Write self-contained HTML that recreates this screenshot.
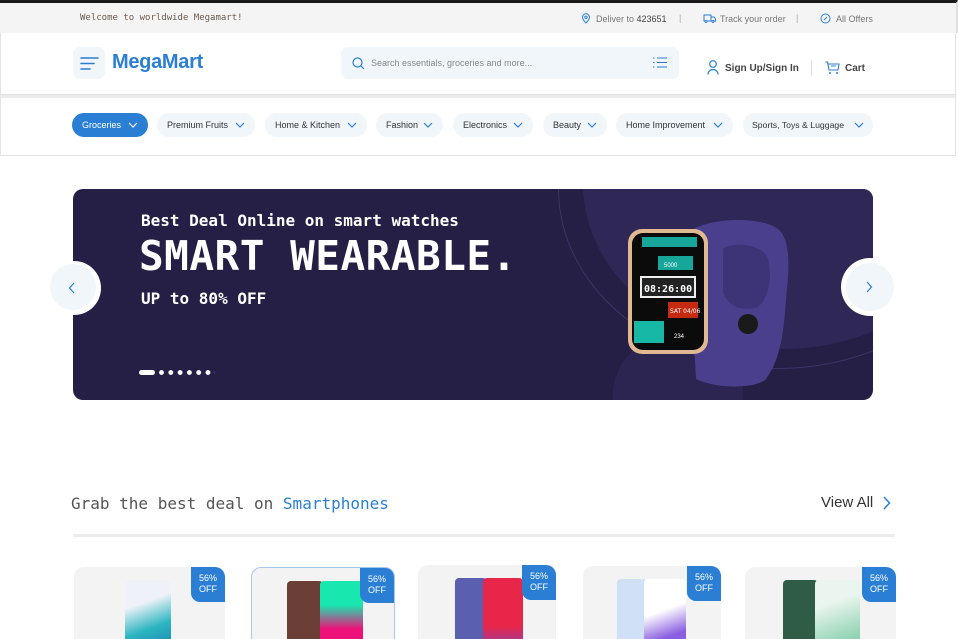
<!DOCTYPE html>
<html style="width:958px;height:639px;overflow:hidden"><head><meta charset="utf-8"><style>
*{margin:0;padding:0;box-sizing:border-box}
body{width:958px;height:639px;overflow:hidden;background:#fff;font-family:"Liberation Sans",sans-serif;position:relative}
.a{position:absolute}
.top{left:0;top:0;width:958px;height:33px;background:#f4f4f4;border-top:3px solid #1a1a1a;border-right:2px solid #ddd}
.mono{font-family:"DejaVu Sans Mono","Liberation Mono",monospace}
.sm{font-size:9px;color:#777}
.hdr{left:0;top:33px;width:956px;height:62px;border:1px solid #e2e2e2;border-top:none;background:#fff}
.nav{left:0;top:95px;width:956px;height:61px;border:1px solid #e2e2e2;border-top:3px solid #ececec;background:#fff}
.pill{position:absolute;top:113px;height:24px;border-radius:12px;background:#f0f6fa;font-size:9px;color:#333;line-height:24px;padding-left:10px;white-space:nowrap}
.pill svg{position:absolute;right:10px;top:9px}
.card{position:absolute;background:#f3f3f3;border-radius:10px;height:90px;overflow:hidden}
.badge{position:absolute;right:0;top:0;width:34px;height:35px;background:#2a7fd4;color:#fff;font-size:9px;text-align:center;line-height:11px;padding-top:6px;border-bottom-left-radius:9px}
.ph{position:absolute;top:13px;height:80px;border-radius:4px}
</style></head><body>
<div class="a top"></div>
<div class="a mono" style="left:80px;top:13px;font-size:9px;color:#6a5a50">Welcome to worldwide Megamart!</div>
<svg class="a" style="left:581px;top:13px" width="10" height="11" viewBox="0 0 10 11"><path d="M5 10C2 7 1.5 5.5 1.5 4.3a3.5 3.5 0 0 1 7 0C8.5 5.5 8 7 5 10z" fill="none" stroke="#2a7fd4" stroke-width="1"/><circle cx="5" cy="4.3" r="1.2" fill="none" stroke="#2a7fd4"/></svg>
<div class="a sm" style="left:596px;top:14px">Deliver to <b style="color:#444;font-weight:normal">423651</b></div>
<div class="a sm" style="left:679px;top:13px;color:#aaa">|</div>
<svg class="a" style="left:703px;top:14px" width="13" height="9" viewBox="0 0 13 9"><path d="M1 1h7v6H1zM8 3h3l1.5 2v2H8" fill="none" stroke="#2a7fd4"/><circle cx="3" cy="7.5" r="1" fill="#fff" stroke="#2a7fd4"/><circle cx="10" cy="7.5" r="1" fill="#fff" stroke="#2a7fd4"/></svg>
<div class="a sm" style="left:720px;top:14px">Track your order</div>
<div class="a sm" style="left:796px;top:13px;color:#aaa">|</div>
<svg class="a" style="left:820px;top:13px" width="11" height="11" viewBox="0 0 11 11"><circle cx="5.5" cy="5.5" r="4.5" fill="none" stroke="#2a7fd4"/><path d="M4 7l3-3" stroke="#2a7fd4"/></svg>
<div class="a sm" style="left:836px;top:14px">All Offers</div>

<div class="a hdr"></div>
<div class="a" style="left:73px;top:47px;width:32px;height:32px;border-radius:7px;background:#f0f6fa"></div>
<svg class="a" style="left:80px;top:56px" width="19" height="15"><path d="M1 2h17M1 7.5h13M1 13h9" stroke="#2a7fd4" stroke-width="1.6" stroke-linecap="round"/></svg>
<div class="a" style="left:112px;top:51px;font-size:20px;font-weight:bold;color:#2a7fd4;letter-spacing:-0.3px">MegaMart</div>
<div class="a" style="left:341px;top:47px;width:338px;height:32px;border-radius:7px;background:#f0f6fa"></div>
<svg class="a" style="left:352px;top:57px" width="13" height="13"><circle cx="5.5" cy="5.5" r="4.5" fill="none" stroke="#2a7fd4" stroke-width="1.2"/><path d="M9 9l3 3" stroke="#2a7fd4" stroke-width="1.2"/></svg>
<div class="a" style="left:371px;top:58px;font-size:9px;color:#888">Search essentials, groceries and more...</div>
<svg class="a" style="left:653px;top:57px" width="14" height="11"><path d="M0 1h1.5M4 1h10M0 5.5h1.5M4 5.5h10M0 10h1.5M4 10h10" stroke="#2a7fd4" stroke-width="1.1"/></svg>
<svg class="a" style="left:707px;top:60px" width="12" height="15"><circle cx="6" cy="4" r="3.3" fill="none" stroke="#2a7fd4" stroke-width="1.2"/><path d="M1 14.5a5 5 0 0 1 10 0" fill="none" stroke="#2a7fd4" stroke-width="1.2"/></svg>
<div class="a" style="left:725px;top:63px;font-size:10px;font-weight:bold;color:#444">Sign Up/Sign In</div>
<div class="a" style="left:811px;top:60px;width:1px;height:16px;background:#ddd"></div>
<svg class="a" style="left:825px;top:61px" width="15" height="14"><path d="M0.5 1h2l1.5 8h9l1-6H3.2M6 5h5" fill="none" stroke="#2a7fd4" stroke-width="1.1"/><circle cx="5" cy="12" r="1" fill="#2a7fd4"/><circle cx="12" cy="12" r="1" fill="#2a7fd4"/></svg>
<div class="a" style="left:845px;top:63px;font-size:10px;font-weight:bold;color:#444">Cart</div>

<div class="a nav"></div>
<div class="pill" style="left:72px;width:76px;background:#2a7fd4;color:#fff">Groceries<svg width="10" height="7"><path d="M1 1l4 4 4-4" fill="none" stroke="#fff" stroke-width="1.2"/></svg></div>
<div class="pill" style="left:157px;width:98px">Premium Fruits<svg width="10" height="7"><path d="M1 1l4 4 4-4" fill="none" stroke="#2a7fd4" stroke-width="1.2"/></svg></div>
<div class="pill" style="left:265px;width:102px">Home &amp; Kitchen<svg width="10" height="7"><path d="M1 1l4 4 4-4" fill="none" stroke="#2a7fd4" stroke-width="1.2"/></svg></div>
<div class="pill" style="left:376px;width:67px">Fashion<svg width="10" height="7"><path d="M1 1l4 4 4-4" fill="none" stroke="#2a7fd4" stroke-width="1.2"/></svg></div>
<div class="pill" style="left:453px;width:80px">Electronics<svg width="10" height="7"><path d="M1 1l4 4 4-4" fill="none" stroke="#2a7fd4" stroke-width="1.2"/></svg></div>
<div class="pill" style="left:543px;width:64px">Beauty<svg width="10" height="7"><path d="M1 1l4 4 4-4" fill="none" stroke="#2a7fd4" stroke-width="1.2"/></svg></div>
<div class="pill" style="left:616px;width:117px">Home Improvement<svg width="10" height="7"><path d="M1 1l4 4 4-4" fill="none" stroke="#2a7fd4" stroke-width="1.2"/></svg></div>
<div class="pill" style="left:743px;width:130px;padding-left:9px;font-size:8.7px">Sports, Toys &amp; Luggage<svg width="10" height="7" style="right:9px"><path d="M1 1l4 4 4-4" fill="none" stroke="#2a7fd4" stroke-width="1.2"/></svg></div>

<div class="a" style="left:73px;top:189px;width:800px;height:211px;border-radius:10px;background:#251e45;overflow:hidden">
 <div class="a" style="left:510px;top:-170px;width:400px;height:330px;border-radius:50%;background:#2f2756"></div>
 <div class="a" style="left:485px;top:-180px;width:440px;height:360px;border-radius:50%;border:1px solid #3b3466"></div>
 <div class="a" style="left:540px;top:145px;width:130px;height:120px;border-radius:50%;background:#2c2552"></div>
 <svg class="a" style="left:555px;top:25px" width="190" height="175" viewBox="0 0 190 175">
  <path d="M60 20C70 5 130 0 150 15c15 12 10 50 8 70-2 30-5 60-20 80-10 10-50 10-70 0z" fill="#4a3f8c"/>
  <path d="M95 35c10-8 40-5 45 10 5 20 0 40-10 48-15 5-30 0-35-15z" fill="#3d3478"/>
  <circle cx="120" cy="110" r="10" fill="#1a1a1a"/>
  <rect x="0" y="15" width="80" height="125" rx="14" fill="#e0b892"/>
  <rect x="4" y="19" width="72" height="117" rx="11" fill="#0b0b0b"/>
  <rect x="14" y="23" width="55" height="10" fill="#17a69a"/>
  <rect x="30" y="42" width="35" height="14" fill="#17a69a"/>
  <rect x="12" y="62" width="56" height="22" fill="#eee"/><rect x="14" y="64" width="52" height="18" fill="#222"/>
  <text x="16" y="78" font-size="10" fill="#fff" font-family="DejaVu Sans Mono" font-weight="bold">08:26:00</text>
  <rect x="40" y="88" width="30" height="16" fill="#c62b12"/>
  <text x="42" y="99" font-size="6" fill="#fff" font-family="DejaVu Sans">SAT 04/06</text>
  <rect x="6" y="107" width="30" height="22" fill="#18b8a6"/>
  <text x="46" y="124" font-size="6" fill="#fff">234</text>
  <text x="36" y="53" font-size="6" fill="#fff">5000</text>
 </svg>
 <div class="a mono" style="left:68px;top:22px;font-size:16px;font-weight:bold;color:#fff">Best Deal Online on smart watches</div>
 <div class="a mono" style="left:66px;top:43px;font-size:41px;font-weight:bold;color:#fff;letter-spacing:0.5px">SMART WEARABLE.</div>
 <div class="a mono" style="left:68px;top:100px;font-size:16px;font-weight:bold;color:#fff">UP to 80% OFF</div>
 <div class="a" style="left:66px;top:181px;width:16px;height:5px;border-radius:3px;background:#fff"></div>
 <div class="a" style="left:86px;top:181px;width:56px;height:5px;background:radial-gradient(circle at 2.5px 2.5px,#fff 2.2px,transparent 2.6px) 0 0/9.3px 5px repeat-x"></div>
</div>
<div class="a" style="left:47px;top:261px;width:54px;height:54px;border-radius:50%;background:#fff"></div>
<div class="a" style="left:50px;top:264px;width:46px;height:46px;border-radius:50%;background:#f0f6fa"></div>
<svg class="a" style="left:68px;top:282px" width="8" height="12"><path d="M6 1L1.5 6 6 11" fill="none" stroke="#2a7fd4" stroke-width="1.2"/></svg>
<div class="a" style="left:841px;top:258px;width:58px;height:58px;border-radius:50%;background:#fff"></div>
<div class="a" style="left:846px;top:263px;width:48px;height:48px;border-radius:50%;background:#f0f6fa"></div>
<svg class="a" style="left:865px;top:281px" width="8" height="12"><path d="M2 1l4.5 5L2 11" fill="none" stroke="#2a7fd4" stroke-width="1.2"/></svg>

<div class="a mono" style="left:71px;top:494px;font-size:16px;color:#555">Grab the best deal on <span style="color:#2a7fd4">Smartphones</span></div>
<div class="a" style="left:821px;top:494px;font-size:15px;color:#333">View All</div>
<svg class="a" style="left:882px;top:496px" width="9" height="14"><path d="M2 1l5.5 6L2 13" fill="none" stroke="#2a7fd4" stroke-width="1.5"/></svg>
<div class="a" style="left:73px;top:534px;width:822px;height:3px;background:#ececec"></div>

<div class="card" style="left:74px;top:567px;width:151px"><div class="ph" style="left:51px;width:46px;background:linear-gradient(160deg,#eef2f8 30%,#2bb5c0 60%,#1c6fb3)"></div><div class="badge">56%<br>OFF</div></div>
<div class="card" style="left:251px;top:567px;width:144px;border:1px solid #a8c9ee"><div class="ph" style="left:35px;width:36px;background:#6b3f36"></div><div class="ph" style="left:68px;width:43px;background:linear-gradient(#18e7b0 30%,#ee117a 60%)"></div><div class="badge">56%<br>OFF</div></div>
<div class="card" style="left:418px;top:565px;width:138px"><div class="ph" style="left:37px;width:32px;background:#5a5fb0"></div><div class="ph" style="left:65px;width:40px;background:linear-gradient(#e8264a 60%,#6a4cd0)"></div><div class="badge">56%<br>OFF</div></div>
<div class="card" style="left:583px;top:566px;width:138px"><div class="ph" style="left:34px;width:30px;background:#cfe0f7"></div><div class="ph" style="left:61px;width:42px;background:linear-gradient(160deg,#fff 40%,#8a5ee0 70%)"></div><div class="badge">56%<br>OFF</div></div>
<div class="card" style="left:745px;top:567px;width:151px"><div class="ph" style="left:38px;width:35px;background:#2f5c45"></div><div class="ph" style="left:70px;width:45px;background:linear-gradient(160deg,#e9f5ee 30%,#5cbf90)"></div><div class="badge">56%<br>OFF</div></div>
</body></html>
